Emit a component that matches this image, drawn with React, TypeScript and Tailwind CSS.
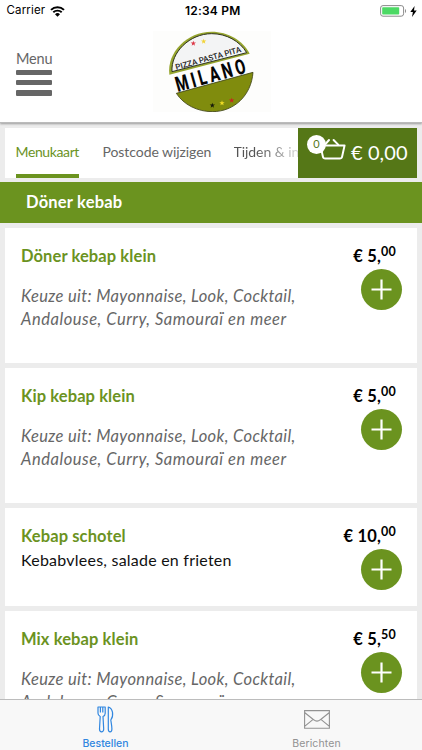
import { useState } from "react"

type Dish = {
  name: string
  sauces?: boolean
  description?: string
  euros: string
  cents: string
}

const dishes: Dish[] = [
  { name: "Döner kebap klein", sauces: true, euros: "5", cents: "00" },
  { name: "Kip kebap klein", sauces: true, euros: "5", cents: "00" },
  { name: "Kebap schotel", description: "Kebabvlees, salade en frieten", euros: "10", cents: "00" },
  { name: "Mix kebap klein", sauces: true, euros: "5", cents: "50" },
]

const StatusBar = () => (
  <div className="grid h-[22px] grid-cols-3 items-center pl-[6.5px] pr-[5px] font-['Inter',sans-serif] text-[11px] text-black">
    <div className="flex items-center gap-[5px]">
      <span className="text-[11.5px] tracking-[0.15px]">Carrier</span>
      <svg width="15" height="11" viewBox="0 0 15 11" fill="none" stroke="black">
        <path d="M1 3.9a9.2 9.2 0 0 1 13 0" strokeWidth="2" />
        <path d="M3.3 6.3a6 6 0 0 1 8.4 0" strokeWidth="1.9" />
        <path d="M7.5 10.8 5 8.3a3.6 3.6 0 0 1 5 0z" fill="black" stroke="none" />
      </svg>
    </div>
    <span className="pl-[2px] text-center text-[12px] font-semibold tracking-[0.2px] whitespace-nowrap">12:34 PM</span>
    <div className="flex items-center justify-end gap-[3px]">
      <svg width="27" height="12" viewBox="0 0 27 12" fill="none">
        <rect x="0.6" y="0.6" width="23" height="10.6" rx="2.4" stroke="#8a8a8a" />
        <rect x="2.2" y="2.2" width="17" height="7.4" rx="0.8" fill="#4cd964" />
        <path d="M25 4v4c1.4-.6 1.4-3.4 0-4z" fill="#8a8a8a" />
      </svg>
      <svg width="7" height="11" viewBox="0 0 7 11">
        <path d="M4.6 0 .3 6h2.6L2 11l4.7-6.5H4z" fill="black" />
      </svg>
    </div>
  </div>
)

const Star = ({ x, y, color }: { x: number; y: number; color: string }) => (
  <path
    transform={`translate(${x} ${y})`}
    d="M0-8 2-2.5 8-2.5 3.2 1.2 5 7 0 3.5-5 7-3.2 1.2-8-2.5-2-2.5z"
    fill={color}
  />
)

const Logo = () => (
  <svg width="118" height="81" viewBox="9 93 354 243" className="block">
    <rect x="9" y="93" width="354" height="243" fill="#fdfdfc" />
    <path d="M58 224C50 157 111 95 185 95c49 0 94 26 114 66z" fill="#96a52e" />
    <path d="M66 215C62 157 119 101 185 101c44 0 84 22 105 57z" fill="#f3f4f5" stroke="#303420" strokeWidth="3" />
    <path d="M79 280 309 217C304 286 253 335 187 335c-45 0-86-21-108-55z" fill="#808c0d" stroke="#3d4216" strokeWidth="2.5" />
    <Star x={130} y={130} color="#dc3545" />
    <Star x={161} y={124} color="#f2d335" />
    <Star x={187} y={316} color="#171a0c" />
    <Star x={216} y={309} color="#f1dd25" />
    <Star x={245} y={301} color="#c8241f" />
    <text
      transform="translate(79 210) rotate(-15.5)"
      fontFamily="Roboto, sans-serif"
      fontSize="24"
      fontWeight="500"
      fill="#222"
      textLength="203"
      lengthAdjust="spacingAndGlyphs"
    >
      PIZZA PASTA PITA
    </text>
    <text
      transform="translate(83 276) rotate(-15.6) scale(0.76 1.1)"
      fontFamily="Roboto, sans-serif"
      fontSize="58"
      fontWeight="800"
      fill="#050505"
      textLength="284"
      lengthAdjust="spacing"
    >
      MILANO
    </text>
  </svg>
)

const Header = () => (
  <header className="relative z-10 h-[123px] shrink-0 border-b border-[#bbb] bg-white shadow-[0_1px_2px_rgba(0,0,0,0.35)]">
    <StatusBar />
    <div className="grid grid-cols-[153px_118px_1fr] pt-[9px]">
      <button className="flex flex-col items-start pt-[17px] pl-4 text-[#666]">
        <span className="text-[14.5px] leading-[22px] tracking-[-0.2px]">Menu</span>
        <span className="mt-[-0.5px] flex w-9 flex-col gap-[5px]">
          <span className="h-[5.4px] rounded-[1px] bg-[#666]" />
          <span className="h-[5.4px] rounded-[1px] bg-[#666]" />
          <span className="h-[5.4px] rounded-[1px] bg-[#666]" />
        </span>
      </button>
      <Logo />
    </div>
  </header>
)

const Basket = () => (
  <button className="relative flex h-[50px] w-[119px] shrink-0 items-center bg-[#557717] pl-[21px] text-white">
    <svg width="27" height="24" viewBox="0 0 27 24" fill="none" stroke="white" strokeWidth="2" strokeLinecap="round" strokeLinejoin="round" className="mt-[-9px] shrink-0">
      <path d="M1.4 8.4h24.2l-2.5 11.2a2.5 2.500 0 0 1-2.400 2H6.300a2.500 2.500 0 0 1-2.400-2z" />
      <path d="M6 7.600 10 3M14.600 3l4.600 4.600" />
    </svg>
    <span className="absolute top-[7px] left-[9px] flex size-[19px] items-center justify-center rounded-full bg-white text-[11px] text-[#557717]">
      0
    </span>
    <span className="mt-[-2px] ml-[5px] text-[20px] tracking-[0.1px] whitespace-nowrap">€ 0,00</span>
  </button>
)

const Navigation = () => (
  <nav className="mx-[5px] mt-[5px] flex h-[50px] shrink-0 justify-between bg-white text-[14px]">
    <div className="flex h-full min-w-0 flex-1 gap-[24px] overflow-hidden pl-[10.5px] whitespace-nowrap text-[#666]">
      <a className="w-[63px] shrink-0 border-b-4 border-[#6b931f] pt-[12.5px] tracking-[-0.38px] text-[#6b931f]">Menukaart</a>
      <a className="w-[107px] shrink-0 pt-[12.5px] tracking-[-0.06px]">Postcode wijzigen</a>
      <a className="shrink-0 bg-linear-to-r from-[#555] from-30% to-white to-95% bg-clip-text pt-[12.5px] tracking-[-0.05px] text-transparent">Tijden &amp; info</a>
    </div>
    <Basket />
  </nav>
)

const DishCard = ({ dish, onAdd }: { dish: Dish; onAdd: () => void }) => (
  <article className={`flex shrink-0 justify-between bg-white pr-[15.5px] pl-4 ${dish.sauces ? "h-[135px]" : "h-[98px]"}`}>
    <div className="pt-[16px]">
      <h2 className="text-[16.5px] leading-[24px] font-bold tracking-[0.1px] text-[#6b931f]">{dish.name}</h2>
      {dish.description && <p className="text-[16px] leading-[23px] tracking-[0.23px] text-[#111]">{dish.description}</p>}
      {dish.sauces && (
        <p className="mt-[16.5px] text-[16.5px] leading-[23.5px] whitespace-nowrap text-[#666] italic">
          <span className="tracking-[0.37px]">Keuze uit: Mayonnaise, Look, Cocktail,</span>
          <br />
          <span className="tracking-[0.53px]">Andalouse, Curry, Samouraï en meer</span>
        </p>
      )}
    </div>
    <div className="flex flex-col items-end pt-[16px]">
      <div className="mr-[5.5px] flex text-[16.5px] leading-[24px] font-bold tracking-[0.2px] whitespace-nowrap text-black">
        € {dish.euros},<span className="mt-[-4px] text-[12.5px]">{dish.cents}</span>
      </div>
      <button onClick={onAdd} className="mt-[0.5px] flex size-[41px] items-center justify-center rounded-full bg-[#6b931f]">
        <svg width="21" height="21" viewBox="0 0 21 21" stroke="white" strokeWidth="2.2">
          <path d="M10.5.5v20M.5 10.5h20" />
        </svg>
      </button>
    </div>
  </article>
)

const TabBar = () => (
  <footer className="grid h-[51px] shrink-0 grid-cols-2 border-t border-[#bcbcbc] bg-[#f8f8f8] font-['Inter',sans-serif] text-[10.5px] leading-[13px]">
    <button className="flex flex-col items-center pt-[6px] font-medium text-[#3187e0]">
      <svg width="17" height="27" viewBox="0 0 17 27" fill="none" stroke="currentColor" strokeWidth="1.2" strokeLinejoin="round">
        <path d="M1 1v6.2c0 1.8 1 2.7 2.2 3.3L2.5 23c0 3.8 4.2 3.8 4.2 0L6 10.5c1.3-.6 2.2-1.5 2.2-3.3V1z" />
        <path d="M3.4 1v5.5M5.800 1v5.500" />
        <path d="M11.3 1v22c0 3.8 3.600 3.800 3.600 0 0-3-.8-6.500-1.100-9 3.200-4.200 2.200-11.600-2.500-13z" />
      </svg>
      <span className="mt-[3.5px]">Bestellen</span>
    </button>
    <button className="flex flex-col items-center pt-[10px] text-[#929292]">
      <svg width="26" height="19" viewBox="0 0 26 19" fill="none" stroke="currentColor" strokeWidth="1.1">
        <path d="M.6.6h24.8v17.6H.6zM.6 2.5l9 7.2c2.6 2.2 4.2 2.2 6.8 0l9-7.2M.6 16.3l8.500-7M25.400 16.300l-8.500-7" />
      </svg>
      <span className="mt-[7.5px] tracking-[0.1px]">Berichten</span>
    </button>
  </footer>
)

const App = () => {
  const [, setOrder] = useState<string[]>([])

  return (
    <div className="flex h-[750px] w-full flex-col overflow-hidden bg-[#ececec] font-['Lato','Noto_Sans',sans-serif]">
      <Header />
      <Navigation />
      <h1 className="mt-[4px] flex h-[41px] shrink-0 items-center bg-[#6b931f] pl-[26px] text-[16.5px] font-bold tracking-[0.2px] text-white">
        Döner kebab
      </h1>
      <main className="mx-[5px] mt-[5px] flex min-h-0 flex-1 flex-col gap-[5px] overflow-hidden">
        {dishes.map((dish) => (
          <DishCard key={dish.name} dish={dish} onAdd={() => setOrder((order) => [...order, dish.name])} />
        ))}
      </main>
      <TabBar />
    </div>
  )
}

export default App
